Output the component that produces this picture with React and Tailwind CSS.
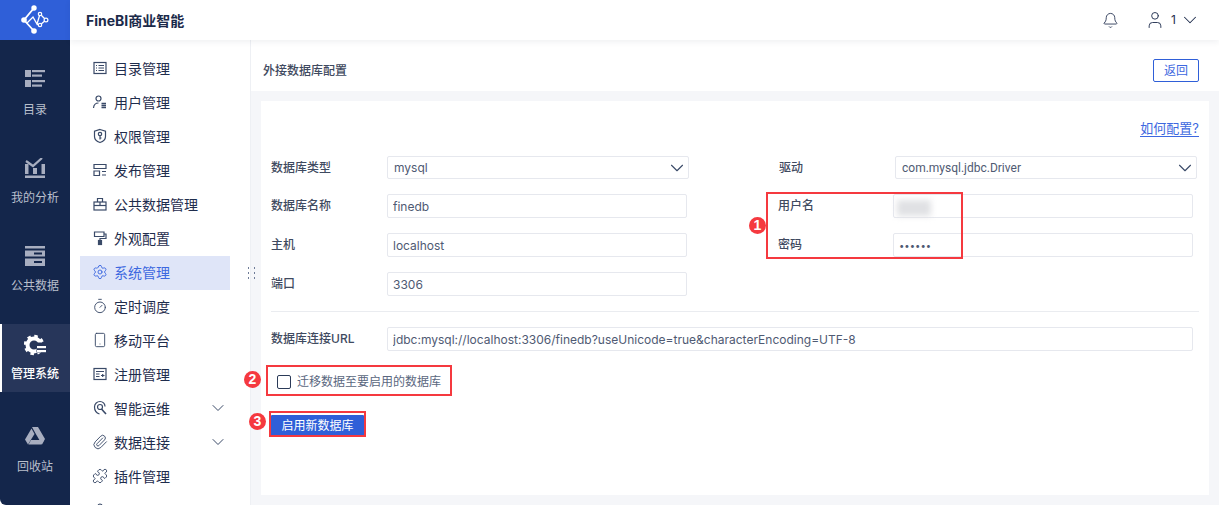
import React from 'react';
import { Bell, User, ChevronDown, Settings, Timer, Smartphone, Paperclip, Puzzle } from 'lucide-react';

const FONT = 'font-["Inter","Noto_Sans_CJK_SC",sans-serif]';

/* small outline icons for the second-level menu */
const Outline = ({ children }) => (
  <svg width="16" height="16" viewBox="0 0 16 16" fill="none" stroke="currentColor" strokeWidth="1.2">
    {children}
  </svg>
);

const IconCatalog = () => (
  <Outline>
    <rect x="2" y="2.500" width="12" height="11" />
    <path d="M4 5.500h1M6.500 5.500H12M4 8h1M6.500 8H12M4 10.500h1M6.500 10.500H12" />
  </Outline>
);
const IconUsers = () => (
  <Outline>
    <circle cx="6.500" cy="4.500" r="2.500" />
    <path d="M1.500 14c.3-3.200 2.400-5 5-5" />
    <path d="M9.500 9.500H14M9.500 11.500H14M9.500 13.500H14" strokeWidth="1.500" />
  </Outline>
);
const IconShield = () => (
  <Outline>
    <path d="M8 1.500l5.500 1.800v5.200c0 3-2.500 5-5.500 6-3-1-5.500-3-5.500-6V3.300z" />
    <circle cx="8" cy="6" r="1.700" />
    <path d="M8 7.700v3.800M8 10h1.500" />
  </Outline>
);
const IconPublish = () => (
  <Outline>
    <path d="M2 2.500h12v4H2zM2 9h5.500v4.500H2zM10 9.500h4M10 13h4" />
  </Outline>
);
const IconBag = () => (
  <Outline>
    <rect x="2" y="6" width="12" height="8" />
    <path d="M5.500 6V2.500h5V6M8 6v3" />
    <path d="M2 9.500h12" />
  </Outline>
);
const IconBrush = () => (
  <Outline>
    <path d="M2.500 2h9.500v4.500H2.500zM12 4h2v4.500H8v2" />
    <rect x="6.500" y="10.500" width="3" height="4" fill="currentColor" />
  </Outline>
);
const IconRegister = () => (
  <Outline>
    <rect x="2" y="2.500" width="12" height="11" />
    <path d="M4 5.500h8M4 8h3.500M4 10.500h3.500M9 9.500h3.500M10.700 8v3" />
  </Outline>
);
const IconOps = () => (
  <Outline>
    <path d="M13 6.500C13 3.700 10.800 1.500 8 1.500S2.500 3.700 2.500 7c0 3.300 2 6 5 7" />
    <circle cx="8" cy="7" r="2.500" />
    <path d="M9.500 9l4.500 5" strokeWidth="1.600" />
  </Outline>
);
const IconLast = () => (
  <Outline>
    <circle cx="8" cy="4" r="2" />
  </Outline>
);

const MENU = [
  { label: '目录管理', icon: <IconCatalog /> },
  { label: '用户管理', icon: <IconUsers /> },
  { label: '权限管理', icon: <IconShield /> },
  { label: '发布管理', icon: <IconPublish /> },
  { label: '公共数据管理', icon: <IconBag /> },
  { label: '外观配置', icon: <IconBrush /> },
  { label: '系统管理', icon: <Settings size={16} strokeWidth={1.4} />, active: true },
  { label: '定时调度', icon: <Timer size={16} strokeWidth={1.4} /> },
  { label: '移动平台', icon: <Smartphone size={16} strokeWidth={1.4} /> },
  { label: '注册管理', icon: <IconRegister /> },
  { label: '智能运维', icon: <IconOps />, more: true },
  { label: '数据连接', icon: <Paperclip size={16} strokeWidth={1.4} />, more: true },
  { label: '插件管理', icon: <Puzzle size={16} strokeWidth={1.4} /> },
  { label: '', icon: <IconLast /> },
];

/* first-level rail icons */
const RailCatalog = () => (
  <svg width="20" height="18" viewBox="0 0 20 18" fill="currentColor">
    <rect x="0" y="0" width="6" height="7" />
    <rect x="0" y="10" width="6" height="7" />
    <rect x="7" y="0" width="13" height="2.200" />
    <rect x="7" y="4.500" width="10" height="2.200" />
    <rect x="7" y="10" width="13" height="2.200" />
    <rect x="7" y="14.500" width="10" height="2.200" />
  </svg>
);
const RailAnalysis = () => (
  <svg width="20" height="20" viewBox="0 0 20 20" fill="currentColor">
    <rect x="0" y="6" width="3.500" height="10" />
    <rect x="8" y="10" width="4" height="6" />
    <rect x="16.500" y="6" width="3.500" height="10" />
    <rect x="0" y="17.500" width="20" height="2.500" />
    <path d="M1 3l7 5 9-8" fill="none" stroke="currentColor" strokeWidth="2.200" />
  </svg>
);
const RailData = () => (
  <svg width="20" height="20" viewBox="0 0 20 20" fill="currentColor">
    <rect x="0" y="0" width="20" height="2.500" />
    <path d="M0 4.500h20v6H0zM9 6.500v2h8v-2z" fillRule="evenodd" />
    <path d="M0 12.500h20v7.500H0zM9 15v2h8v-2z" fillRule="evenodd" />
  </svg>
);
const RailSystem = () => (
  <svg width="22" height="22" viewBox="0 0 22 22">
    <circle cx="10" cy="11" r="6.500" fill="none" stroke="#fff" strokeWidth="4" />
    <circle cx="10" cy="11" r="9" fill="none" stroke="#fff" strokeWidth="2.500" strokeDasharray="3.500 3.570" />
    <rect x="12.500" y="8.500" width="9.500" height="10" fill="#27365a" />
    <rect x="13" y="12" width="9" height="2.200" fill="#fff" />
    <rect x="13" y="16" width="9" height="2.200" fill="#fff" />
  </svg>
);
const RailRecycle = () => (
  <svg width="20" height="18" viewBox="0 0 20 18" fill="currentColor">
    <path d="M7 0h6l7 12-3 5.500L10 5.500 7 0z" />
    <path d="M6.500 1.500L9.500 7 3 17.500 0 12.500z" />
    <path d="M6 13h13l-2.500 4.500H3.500z" />
  </svg>
);

const RAIL = [
  { label: '目录', icon: <RailCatalog /> },
  { label: '我的分析', icon: <RailAnalysis /> },
  { label: '公共数据', icon: <RailData /> },
  { label: '管理系统', icon: <RailSystem />, active: true },
  { label: '回收站', icon: <RailRecycle />, last: true },
];

const Logo = () => (
  <svg width="30" height="30" viewBox="0 0 30 30" fill="none" stroke="#fff">
    <path d="M14 3L4 15l10 11" strokeWidth="1.800" />
    <path d="M7 18l6-6 4 7 3-10M20 9l6 6-6 5-3-1" strokeWidth="1.300" />
    <g fill="#fff" stroke="none">
      <circle cx="14" cy="3" r="2.700" />
      <circle cx="4" cy="15" r="2.800" />
      <circle cx="14" cy="26" r="2.800" />
    </g>
    <g fill="#2f5fd8" strokeWidth="1.200">
      <circle cx="20" cy="9" r="1.700" />
      <circle cx="26" cy="15" r="1.900" />
      <circle cx="20" cy="20" r="1.700" />
    </g>
  </svg>
);

function Field({ label, value, select, labelWidth = 'w-[116px]', valueClass = 'text-xs' }) {
  return (
    <div className="flex items-center">
      <label className={`${labelWidth} shrink-0 text-xs font-medium text-[#3f4a60]`}>{label}</label>
      {select ? (
        <div className="flex h-[23px] w-[302px] items-center justify-between rounded-[2px] border border-[#e6e8ee] pl-[6px] text-[#4f5a73]">
          <span className={valueClass}>{value}</span>
          <ChevronDown size={22} strokeWidth={1.2} className="text-[#3a4a68]" />
        </div>
      ) : (
        <input
          readOnly
          value={value}
          className={`h-[24px] w-[300px] rounded-[2px] border border-[#e6e8ee] px-[5px] text-[#4f5a73] outline-none ${valueClass}`}
        />
      )}
    </div>
  );
}

const Badge = ({ n, className }) => (
  <span className={`absolute flex h-[17px] w-[17px] items-center justify-center rounded-full bg-[#f5393f] font-["Liberation_Sans",sans-serif] text-[14px] font-bold text-white ${className}`}>
    {n}
  </span>
);

export default function App() {
  return (
    <div className={`flex h-[505px] w-[1219px] overflow-hidden bg-white ${FONT}`}>
      {/* first-level rail */}
      <aside className="flex w-[70px] shrink-0 flex-col rounded-bl-[6px] bg-[#14264b]">
        <div className="flex h-10 items-center justify-center bg-[#2f5fd8]">
          <Logo />
        </div>
        <nav className="flex flex-col gap-5 pt-5">
          {RAIL.map((item) => (
            <div
              key={item.label}
              className={
                'flex h-[68px] flex-col items-center justify-between py-[10px] text-xs ' +
                (item.active
                  ? 'border-l-2 border-white bg-[#27365a] pr-[2px] font-medium text-white'
                  : 'text-[#b9bfcc]') +
                (item.last ? ' mt-[5px]' : '')
              }
            >
              <span className={item.active ? 'text-white' : 'text-[#a8aec0]'}>{item.icon}</span>
              <span>{item.label}</span>
            </div>
          ))}
        </nav>
      </aside>

      <div className="flex min-w-0 flex-1 flex-col">
        {/* top bar */}
        <header className="relative z-10 flex h-10 shrink-0 items-center justify-between bg-white pl-4 pr-[18px] shadow-[0_2px_6px_rgba(30,40,70,0.07)]">
          <span className="text-[14px] font-bold text-[#1b2a4a]">FineBI商业智能</span>
          <div className="flex items-center text-[#1f2d4d]">
            <Bell size={17} strokeWidth={1.2} />
            <User size={20} strokeWidth={1.1} className="ml-[26px]" />
            <span className="ml-[6px] text-xs">1</span>
            <ChevronDown size={22} strokeWidth={1.1} className="ml-[3px]" />
          </div>
        </header>

        <div className="flex min-h-0 flex-1">
          {/* second-level menu */}
          <nav className="w-[181px] shrink-0 overflow-hidden border-r border-[#eef0f4] pl-[10px] pr-5 pt-3">
            {MENU.map((item, i) => (
              <div
                key={i}
                className={
                  'flex h-[34px] items-center gap-[6px] pb-[2px] pl-3 pr-[2px] text-[14px] ' +
                  (item.active ? 'bg-[#dfe5f8] text-[#3d68e0]' : 'text-[#1f2d4d]')
                }
              >
                <span className={item.active ? 'text-[#3d68e0]' : 'text-[#3a4a68]'}>{item.icon}</span>
                <span className="flex-1">{item.label}</span>
                {item.more && <ChevronDown size={20} strokeWidth={1.2} className="text-[#3a4a68]" />}
              </div>
            ))}
          </nav>

          {/* page */}
          <main className="relative flex min-w-0 flex-1 flex-col bg-[#f5f6f9]">
            <span className="absolute left-[-3px] top-[227px] grid grid-cols-2 gap-x-[5px] gap-y-[3px]">
              {[0, 1, 2, 3, 4, 5].map((d) => (
                <i key={d} className="block h-[2px] w-[1px] bg-[#6f7c98]" />
              ))}
            </span>

            <div className="flex h-[51px] shrink-0 items-center justify-between bg-white pl-3 pr-5 pt-[10px]">
              <h1 className="text-xs font-medium text-[#3f4a60]">外接数据库配置</h1>
              <button className="h-[23px] w-[46px] rounded-[2px] border border-[#2f5fd8] text-xs text-[#3d68e0]">
                返回
              </button>
            </div>

            <section className="relative mx-[10px] mb-[10px] mt-[10px] flex-1 bg-white px-[10px]">
              <div className="flex h-[55px] items-end justify-end pb-[19px]">
                <a className="border-b border-[#3d68e0] text-[13px] leading-[15px] text-[#3d68e0]">如何配置?</a>
              </div>

              <div className="flex">
                <div className="flex w-[507px] flex-col gap-[15px]">
                  <Field label="数据库类型" value="mysql" select />
                  <Field label="数据库名称" value="finedb" />
                  <Field label="主机" value="localhost" />
                  <Field label="端口" value="3306" />
                </div>
                <div className="flex flex-col gap-[15px]">
                  <Field
                    label="驱动"
                    value="com.mysql.jdbc.Driver"
                    select
                    labelWidth="w-[117px] pl-[1px]"
                    valueClass='font-["Roboto",sans-serif] text-xs'
                  />
                  <Field label="用户名" value="" labelWidth="w-[115px]" />
                  <Field label="密码" value="••••••" labelWidth="w-[115px]" valueClass="text-[9.5px]" />
                </div>
              </div>

              <hr className="mt-[15px] border-[#eaecf0]" />

              <div className="mt-[15px] flex items-center">
                <label className="w-[116px] shrink-0 text-xs font-medium text-[#3f4a60]">数据库连接URL</label>
                <input
                  readOnly
                  value="jdbc:mysql://localhost:3306/finedb?useUnicode=true&characterEncoding=UTF-8"
                  className="h-[24px] w-[806px] rounded-[2px] border border-[#e6e8ee] px-[5px] text-xs text-[#4f5a73] outline-none"
                />
              </div>

              <label className="ml-[6px] mt-[23px] flex items-center gap-[6px] text-xs text-[#5a6780]">
                <span className="h-[14px] w-[14px] rounded-[2px] border border-[#2b3a58]" />
                迁移数据至要启用的数据库
              </label>

              <button className="mt-[25px] block h-[22px] w-[93px] rounded-[1px] bg-[#2f5fd8] text-xs text-white">
                启用新数据库
              </button>

              {/* blurred user name */}
              <div className="absolute left-[636px] top-[99px] h-[16px] w-[34px] bg-[#e0e1e4] blur-[3px]" />

              {/* annotations */}
              <div className="pointer-events-none absolute left-[505px] top-[91px] h-[67px] w-[197px] border-2 border-[#f5393f]" />
              <div className="pointer-events-none absolute left-[5px] top-[264px] h-[31px] w-[186px] border-2 border-[#f5393f]" />
              <div className="pointer-events-none absolute left-[8px] top-[310px] h-[26px] w-[97px] border-2 border-[#f5393f]" />
              <Badge n="1" className="left-[488px] top-[116px]" />
              <Badge n="2" className="left-[-17px] top-[270px]" />
              <Badge n="3" className="left-[-12px] top-[312px]" />
            </section>
          </main>
        </div>
      </div>
    </div>
  );
}
